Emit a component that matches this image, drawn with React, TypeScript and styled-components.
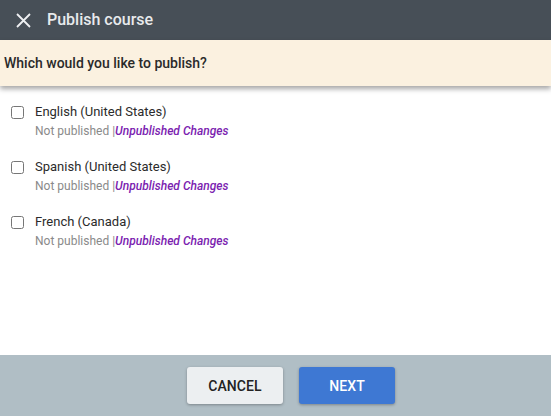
import React from "react";
import styled, { createGlobalStyle } from "styled-components";

const GlobalStyle = createGlobalStyle`
  html, body {
    margin: 0;
    padding: 0;
    background: #ffffff;
  }
  body {
    font-family: Roboto, "Liberation Sans", sans-serif;
  }
`;

const Dialog = styled.div`
  width: 551px;
  height: 416px;
  display: flex;
  flex-direction: column;
  overflow: hidden;
  background: #ffffff;
`;

const Header = styled.div`
  height: 40px;
  flex-shrink: 0;
  background: #474f57;
  display: flex;
  align-items: center;
  padding-left: 15px;
  gap: 15px;
`;

const CloseButton = styled.button`
  width: 17px;
  height: 17px;
  padding: 0;
  border: none;
  background: transparent;
  display: flex;
  align-items: center;
  justify-content: center;
  cursor: pointer;
`;

const Title = styled.div`
  color: #e8eaec;
  font-size: 16px;
  font-weight: 500;
  margin-top: -2px;
`;

const Banner = styled.div`
  height: 46px;
  flex-shrink: 0;
  background: #fbf1e0;
  display: flex;
  align-items: center;
  padding-left: 4px;
  font-size: 14px;
  font-weight: 500;
  color: #2a2a2a;
  box-shadow: 0 3px 5px rgba(0, 0, 0, 0.35);
  position: relative;
  z-index: 1;
`;

const List = styled.div`
  flex: 1;
  display: flex;
  flex-direction: column;
  gap: 19px;
  padding: 17px 0 0 10px;
`;

const Row = styled.label`
  display: flex;
  align-items: flex-start;
  gap: 11px;
`;

const Box = styled.input`
  width: 13px;
  height: 13px;
  margin: 3px 0 0 1px;
  flex-shrink: 0;
`;

const Texts = styled.div`
  display: flex;
  flex-direction: column;
  gap: 3px;
`;

const Name = styled.div`
  font-size: 13px;
  color: #2b2b2b;
  line-height: 18px;
`;

const Status = styled.div`
  font-size: 12px;
  color: #8a8a8a;
  line-height: 15px;
`;

const Changes = styled.span`
  color: #7b22b0;
  font-style: italic;
  font-weight: 500;
`;

const Footer = styled.div`
  height: 61px;
  flex-shrink: 0;
  background: #b0bec5;
  display: flex;
  align-items: center;
  justify-content: center;
  gap: 16px;
  padding-left: 31px;
`;

const Button = styled.button<{ $primary?: boolean }>`
  width: 96px;
  height: 37px;
  border: none;
  border-radius: 3px;
  font-family: Roboto, "Liberation Sans", sans-serif;
  font-size: 14px;
  font-weight: 500;
  text-transform: uppercase;
  letter-spacing: 0.1px;
  color: ${(p) => (p.$primary ? "#ffffff" : "#222222")};
  background: ${(p) => (p.$primary ? "#3e78d3" : "#eceff1")};
  box-shadow: 0 1px 3px rgba(0, 0, 0, 0.3);
  cursor: pointer;
`;

const languages = ["English (United States)", "Spanish (United States)", "French (Canada)"];

export default function App() {
  return (
    <>
      <GlobalStyle />
      <Dialog>
        <Header>
          <CloseButton aria-label="Close">
            <svg width="15" height="15" viewBox="0 0 15 15">
              <path d="M1 1 L14 14 M14 1 L1 14" stroke="#eef0f2" strokeWidth="1.8" />
            </svg>
          </CloseButton>
          <Title>Publish course</Title>
        </Header>
        <Banner>Which would you like to publish?</Banner>
        <List>
          {languages.map((lang) => (
            <Row key={lang}>
              <Box type="checkbox" />
              <Texts>
                <Name>{lang}</Name>
                <Status>
                  Not published |<Changes>Unpublished Changes</Changes>
                </Status>
              </Texts>
            </Row>
          ))}
        </List>
        <Footer>
          <Button>Cancel</Button>
          <Button $primary>Next</Button>
        </Footer>
      </Dialog>
    </>
  );
}
